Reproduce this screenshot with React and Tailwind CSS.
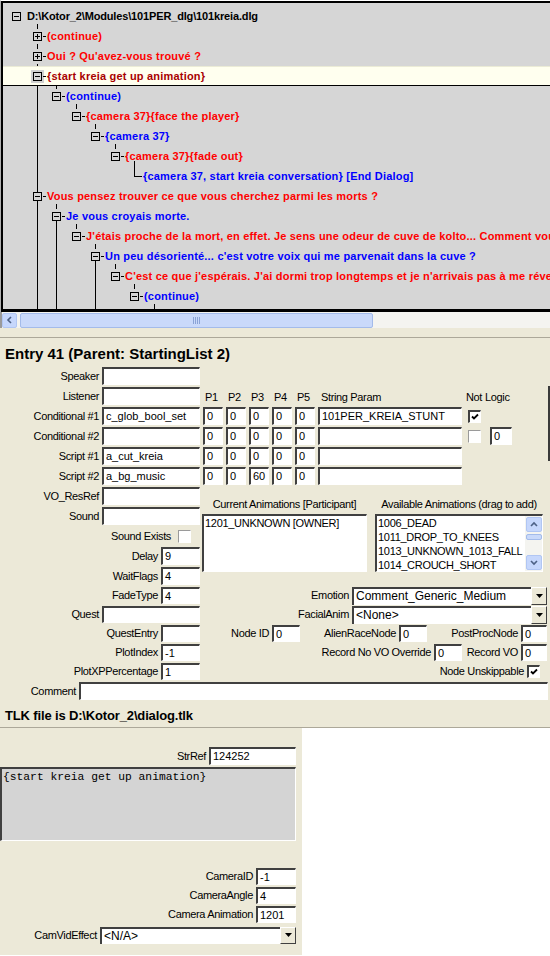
const RED = 'text-[#ff0000]';
const BLUE = 'text-[#0000ff]';

// tree rows, pad = box left inside the tree (page x - 3)
const treeRows = [
  { pad: 'pl-[9px]', root: true, text: 'D:\\Kotor_2\\Modules\\101PER_dlg\\101kreia.dlg', color: 'text-black' },
  { pad: 'pl-[30px]', plus: true, text: '(continue)', color: RED },
  { pad: 'pl-[30px]', plus: true, text: 'Oui ? Qu\'avez-vous trouvé ?', color: RED },
  { pad: 'pl-[30px]', sel: true, text: '{start kreia get up animation}', color: 'text-[#a80000]' },
  { pad: 'pl-[49px]', text: '(continue)', color: BLUE },
  { pad: 'pl-[69px]', text: '{camera 37}{face the player}', color: RED },
  { pad: 'pl-[88px]', text: '{camera 37}', color: BLUE },
  { pad: 'pl-[108px]', text: '{camera 37}{fade out}', color: RED },
  { pad: 'pl-[140px]', leaf: true, text: '{camera 37, start kreia conversation} [End Dialog]', color: BLUE },
  { pad: 'pl-[30px]', text: 'Vous pensez trouver ce que vous cherchez parmi les morts ?', color: RED },
  { pad: 'pl-[49px]', text: 'Je vous croyais morte.', color: BLUE },
  { pad: 'pl-[69px]', text: "J'étais proche de la mort, en effet. Je sens une odeur de cuve de kolto... Comment vous sentez-vous ?", color: RED },
  { pad: 'pl-[88px]', text: "Un peu désorienté... c'est votre voix qui me parvenait dans la cuve ?", color: BLUE },
  { pad: 'pl-[108px]', text: "C'est ce que j'espérais. J'ai dormi trop longtemps et je n'arrivais pas à me réveiller.", color: RED },
  { pad: 'pl-[127px]', text: '(continue)', color: BLUE },
];

// connector dashes above boxes: [x, boxTop] in page coords
const dashes = [
  [37, 32], [37, 52], [37, 72], [56, 92], [76, 112], [95, 132], [115, 152],
  [37, 192], [56, 212], [76, 232], [95, 252], [115, 272], [134, 292], [154, 312],
];

function TreeBox({ plus }) {
  return (
    <svg width="9" height="9" className="block shrink-0">
      <rect x="0.5" y="0.5" width="8" height="8" fill="#d6d6d6" stroke="#000" />
      <line x1="2" y1="4.5" x2="7" y2="4.5" stroke="#000" />
      {plus && <line x1="4.5" y1="2" x2="4.5" y2="7" stroke="#000" />}
    </svg>
  );
}

function Label({ w = '', children }) {
  return (
    <div className={`${w} shrink-0 whitespace-nowrap pr-[3px] text-right text-[11px] tracking-[-0.35px]`}>
      {children}
    </div>
  );
}

function Box({ w, h = 'h-[18px]', className = '', children }) {
  return (
    <div
      className={`${w} ${h} ${className} shrink-0 overflow-hidden whitespace-nowrap border-t-2 border-l-2 border-r border-b border-t-[#404040] border-l-[#404040] border-r-white border-b-white bg-white pl-[2px] text-[11px] leading-[14px]`}
    >
      {children}
    </div>
  );
}

function Check({ checked, className = '' }) {
  if (!checked) {
    return (
      <div className={`${className} h-[13px] w-[13px] shrink-0 border-t border-l border-r border-b border-t-[#9a9a9a] border-l-[#9a9a9a] border-r-white border-b-white bg-white`} />
    );
  }
  return (
    <div className={`${className} flex h-[13px] w-[13px] shrink-0 items-center justify-center border-t-2 border-l-2 border-r border-b border-t-[#404040] border-l-[#404040] border-r-white border-b-white bg-white`}>
      <svg width="8" height="8" viewBox="0 0 8 8">
        <path d="M1 3.5 L3 5.5 L7 1.5" stroke="#000" strokeWidth="1.8" fill="none" />
      </svg>
    </div>
  );
}

function Combo({ w, h = 'h-[18px]', children }) {
  return (
    <div className={`${w} ${h} flex shrink-0`}>
      <div className="flex-1 overflow-hidden whitespace-nowrap border-t-2 border-l-2 border-t-[#404040] border-l-[#404040] bg-white pl-[2px] text-[12px] leading-[15px]">
        {children}
      </div>
      <div className="flex h-full w-[16px] items-center justify-center border-t border-l border-r border-b border-t-white border-l-white border-r-[#404040] border-b-[#404040] bg-[#ece9d8]">
        <svg width="7" height="4" viewBox="0 0 7 4">
          <path d="M0 0 H7 L3.5 4 Z" fill="#000" />
        </svg>
      </div>
    </div>
  );
}

function ParamRow({ label, script, params, str, check, logic }) {
  return (
    <div className="flex h-[20px] items-center">
      <Label w="w-[102px]">{label}</Label>
      <Box w="w-[98px]">{script}</Box>
      <div className="ml-[3px] flex gap-[3px]">
        {params.map((p, i) => (
          <Box key={i} w="w-[20px]">{p}</Box>
        ))}
      </div>
      <Box w="w-[144px]" className="ml-[3px]">{str}</Box>
      {check !== undefined && <Check checked={check} className="ml-[6px]" />}
      {logic !== undefined && <Box w="w-[22px]" className="ml-[9px]">{logic}</Box>}
    </div>
  );
}

function XpArrow({ dir }) {
  const d = dir === 'left' ? 'M5 1 L2 4 L5 7' : dir === 'up' ? 'M1 5 L4 2 L7 5' : 'M1 2 L4 5 L7 2';
  return (
    <svg width="8" height="8" viewBox="0 0 8 8">
      <path d={d} stroke="#4d6185" strokeWidth="1.6" fill="none" />
    </svg>
  );
}

export default function App() {
  return (
    <div className="h-[956px] w-[550px] overflow-hidden bg-white font-['Liberation_Sans',Arial,sans-serif] text-black">
      {/* dialog tree */}
      <div className="border-l border-t border-l-[#b0b0b0] border-t-white">
        <div className="relative h-[311px] overflow-hidden border-l-2 border-t-2 border-b-[3px] border-black bg-[#d6d6d6]">
          <svg className="absolute left-0 top-0" width="550" height="320" shapeRendering="crispEdges">
            <g transform="translate(-3,-3)" stroke="#000" strokeWidth="1">
              {dashes.map(([x, t], i) => (
                <line key={i} x1={x + 0.5} y1={t - 8} x2={x + 0.5} y2={t - 3} />
              ))}
              <line x1="37.5" y1="81" x2="37.5" y2="320" />
              <line x1="56.5" y1="221" x2="56.5" y2="320" />
              <line x1="95.5" y1="261" x2="95.5" y2="320" />
              <line x1="134.5" y1="161" x2="134.5" y2="176.5" />
              <line x1="134" y1="176.5" x2="142" y2="176.5" />
            </g>
          </svg>
          <div className="relative pt-[3px] text-[11px] font-bold">
            {treeRows.map((r, i) => (
              <div
                key={i}
                className={`flex h-[20px] items-center whitespace-nowrap ${r.pad} ${r.sel ? 'border-t border-b border-t-[#ebebd6] border-b-black bg-[#ffffef]' : ''}`}
              >
                {!r.leaf && (
                  <div className={r.sel ? '-m-[2px] bg-[#d0d0d0] p-[2px]' : ''}>
                    <TreeBox plus={r.plus} />
                  </div>
                )}
                {!r.root && !r.leaf && <span className="ml-[1px] h-px w-[3px] shrink-0 bg-black" />}
                <span
                  className={`${r.root ? 'ml-[6px] tracking-[-0.15px]' : r.leaf ? 'tracking-[0.2px]' : 'ml-[1px] tracking-[0.2px]'} ${r.color}`}
                >
                  {r.text}
                </span>
              </div>
            ))}
          </div>
        </div>
      </div>

      {/* horizontal scrollbar */}
      <div className="flex h-[16px] items-center border-l-2 border-l-[#9a9a9a] bg-[#f4f4f0]">
        <div className="flex h-[15px] w-[15px] items-center justify-center rounded-[2px] border border-[#b1c6f3] bg-[#c6d7fc]">
          <XpArrow dir="left" />
        </div>
        <div className="ml-[3px] flex h-[15px] w-[353px] items-center justify-center rounded-[2px] border border-[#a3bbea] bg-[#c9d9fa]">
          <div className="flex gap-[1px]">
            {[0, 1, 2, 3].map((k) => (
              <span key={k} className="h-[7px] w-px bg-[#8aa3d6]" />
            ))}
          </div>
        </div>
      </div>
      <div className="h-[10px] border-b border-[#aca899] bg-[#ece9d8]" />

      {/* entry form */}
      <div className="relative bg-[#ece9d8]">
        <div className="absolute left-[548px] top-[48px] h-[75px] w-[2px] bg-[#3a3a3a]" />
        <div className="h-[28px] pl-[5px] pt-[7px] text-[15px] font-bold leading-[17px]">
          Entry 41 (Parent: StartingList 2)
        </div>

        <div className="flex h-[20px] items-center">
          <Label w="w-[102px]">Speaker</Label>
          <Box w="w-[98px]" />
        </div>
        <div className="flex h-[20px] items-center">
          <Label w="w-[102px]">Listener</Label>
          <Box w="w-[98px]" />
          <div className="ml-[3px] flex translate-y-[1px] text-[11px] tracking-[-0.35px]">
            {['P1', 'P2', 'P3', 'P4', 'P5'].map((p) => (
              <span key={p} className="w-[23px] pl-[2px]">{p}</span>
            ))}
            <span className="w-[148px] pl-[3px]">String Param</span>
            <span className="w-[19px]">Not</span>
            <span>Logic</span>
          </div>
        </div>
        <ParamRow label="Conditional #1" script="c_glob_bool_set" params={['0', '0', '0', '0', '0']} str="101PER_KREIA_STUNT" check={true} />
        <ParamRow label="Conditional #2" script="" params={['0', '0', '0', '0', '0']} str="" check={false} logic="0" />
        <ParamRow label="Script #1" script="a_cut_kreia" params={['0', '0', '0', '0', '0']} str="" />
        <ParamRow label="Script #2" script="a_bg_music" params={['0', '0', '60', '0', '0']} str="" />

        <div className="flex">
          <div className="w-[200px] shrink-0">
            <div className="flex h-[20px] items-center">
              <Label w="w-[102px]">VO_ResRef</Label>
              <Box w="w-[98px]" />
            </div>
            <div className="flex h-[20px] items-center">
              <Label w="w-[102px]">Sound</Label>
              <Box w="w-[98px]" />
            </div>
            <div className="flex h-[20px] items-center justify-end pr-[9px]">
              <Label>Sound Exists</Label>
              <Check checked={false} className="ml-[4px]" />
            </div>
            <div className="flex h-[20px] items-center">
              <Label w="w-[161px]">Delay</Label>
              <Box w="w-[39px]">9</Box>
            </div>
            <div className="flex h-[20px] items-center">
              <Label w="w-[161px]">WaitFlags</Label>
              <Box w="w-[39px]">4</Box>
            </div>
          </div>
          <div className="ml-[2px] pt-[10px]">
            <div className="flex h-[16px] items-center text-[11px] tracking-[-0.35px]">
              <span className="w-[165px] text-center">Current Animations [Participant]</span>
              <span className="ml-[8px] w-[168px] text-center">Available Animations (drag to add)</span>
            </div>
            <div className="mt-[2px] flex">
              <div className="h-[58px] w-[165px] border-t-2 border-l-2 border-r border-b border-t-[#404040] border-l-[#404040] border-r-white border-b-white bg-white pl-[1px] text-[11px] leading-[14px] tracking-[-0.3px]">
                1201_UNKNOWN [OWNER]
              </div>
              <div className="ml-[8px] flex h-[58px] w-[168px] border-t-2 border-l-2 border-r border-b border-t-[#404040] border-l-[#404040] border-r-white border-b-white bg-white">
                <div className="flex-1 pl-[1px] text-[11px] leading-[14px] tracking-[-0.3px]">
                  <div>1006_DEAD</div>
                  <div>1011_DROP_TO_KNEES</div>
                  <div>1013_UNKNOWN_1013_FALL</div>
                  <div>1014_CROUCH_SHORT</div>
                </div>
                <div className="flex w-[17px] flex-col items-center bg-[#f4f4f0] py-[1px]">
                  <div className="flex h-[15px] w-[16px] items-center justify-center rounded-[2px] border border-[#b1c6f3] bg-[#c6d7fc]">
                    <XpArrow dir="up" />
                  </div>
                  <div className="mt-[2px] h-[6px] w-[16px] rounded-[2px] border border-[#a3bbea] bg-[#c9d9fa]" />
                  <div className="mt-auto flex h-[15px] w-[16px] items-center justify-center rounded-[2px] border border-[#b1c6f3] bg-[#c6d7fc]">
                    <XpArrow dir="down" />
                  </div>
                </div>
              </div>
            </div>
          </div>
        </div>

        <div className="flex h-[19px] items-center pr-[3px]">
          <Label w="w-[161px]">FadeType</Label>
          <Box w="w-[39px]" h="h-[17px]">4</Box>
          <Label w="ml-auto">Emotion</Label>
          <Combo w="w-[195px]">Comment_Generic_Medium</Combo>
        </div>
        <div className="flex h-[19px] items-center pr-[3px]">
          <Label w="w-[102px]">Quest</Label>
          <Box w="w-[98px]" h="h-[17px]" />
          <Label w="ml-auto">FacialAnim</Label>
          <Combo w="w-[195px]">&lt;None&gt;</Combo>
        </div>
        <div className="flex h-[19px] items-center">
          <Label w="w-[161px]">QuestEntry</Label>
          <Box w="w-[39px]" h="h-[17px]" />
          <Label w="w-[72px]">Node ID</Label>
          <Box w="w-[28px]" h="h-[17px]">0</Box>
          <Label w="w-[99px]">AlienRaceNode</Label>
          <Box w="w-[28px]" h="h-[17px]">0</Box>
          <Label w="w-[94px]">PostProcNode</Label>
          <Box w="w-[26px]" h="h-[17px]">0</Box>
        </div>
        <div className="flex h-[19px] items-center">
          <Label w="w-[161px]">PlotIndex</Label>
          <Box w="w-[39px]" h="h-[17px]">-1</Box>
          <Label w="w-[234px]">Record No VO Override</Label>
          <Box w="w-[28px]" h="h-[17px]">0</Box>
          <Label w="w-[59px]">Record VO</Label>
          <Box w="w-[26px]" h="h-[17px]">0</Box>
        </div>
        <div className="flex h-[19px] items-center">
          <Label w="w-[161px]">PlotXPPercentage</Label>
          <Box w="w-[39px]" h="h-[17px]">1</Box>
          <Label w="w-[327px]">Node Unskippable</Label>
          <Check checked={true} />
        </div>
        <div className="flex h-[20px] items-center">
          <Label w="w-[79px]">Comment</Label>
          <Box w="w-[469px]" />
        </div>
        <div className="flex h-[26px] items-center pl-[5px] pt-[3px] text-[13px] font-bold tracking-[-0.15px]">
          TLK file is D:\Kotor_2\dialog.tlk
        </div>
      </div>

      {/* text / camera panel */}
      <div className="flex h-[228px] border-t border-[#aca899]">
        <div className="flex w-[302px] flex-col bg-[#ece9d8] pr-[6px]">
          <div className="mt-[19px] flex h-[18px] items-center justify-end">
            <Label>StrRef</Label>
            <Box w="w-[87px]">124252</Box>
          </div>
          <div className="mt-[2px] h-[74px] w-[296px] border-t-2 border-l-2 border-r border-b border-t-[#404040] border-l-[#404040] border-r-white border-b-white bg-[#d4d4d4] pl-[1px] pt-[1px] font-['Liberation_Mono','Courier_New',monospace] text-[11.3px] leading-[14px]">
            {'{start kreia get up animation}'}
          </div>
          <div className="mt-[26px]">
            <div className="flex h-[19px] items-center justify-end">
              <Label>CameraID</Label>
              <Box w="w-[40px]" h="h-[17px]">-1</Box>
            </div>
            <div className="flex h-[19px] items-center justify-end">
              <Label>CameraAngle</Label>
              <Box w="w-[40px]" h="h-[17px]">4</Box>
            </div>
            <div className="flex h-[19px] items-center justify-end">
              <Label>Camera Animation</Label>
              <Box w="w-[40px]" h="h-[17px]">1201</Box>
            </div>
          </div>
          <div className="mt-[2px] flex h-[18px] items-center">
            <Label w="w-[100px]">CamVidEffect</Label>
            <Combo w="w-[196px]" h="h-[17px]">&lt;N/A&gt;</Combo>
          </div>
        </div>
        <div className="flex-1 bg-white" />
      </div>
    </div>
  );
}
